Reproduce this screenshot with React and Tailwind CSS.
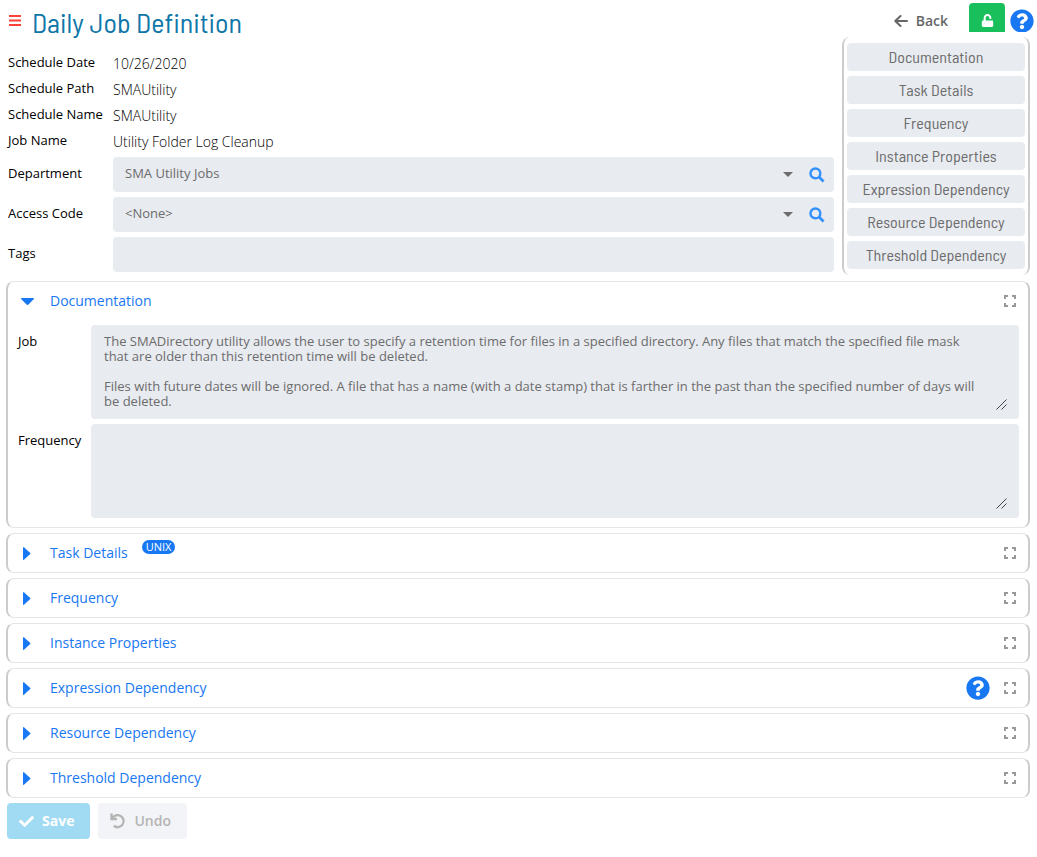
import React from "react";
import { FaCheck, FaQuestionCircle, FaUnlock } from "react-icons/fa";

const sections = [
  "Documentation",
  "Task Details",
  "Frequency",
  "Instance Properties",
  "Expression Dependency",
  "Resource Dependency",
  "Threshold Dependency",
];

const facts = [
  ["Schedule Date", "10/26/2020"],
  ["Schedule Path", "SMAUtility"],
  ["Schedule Name", "SMAUtility"],
  ["Job Name", "Utility Folder Log Cleanup"],
];

const jobText = `The SMADirectory utility allows the user to specify a retention time for files in a specified directory. Any files that match the specified file mask that are older than this retention time will be deleted.

Files with future dates will be ignored. A file that has a name (with a date stamp) that is farther in the past than the specified number of days will be deleted.`;

function ExpandIcon() {
  return (
    <svg viewBox="0 0 12 12" className="h-3 w-3 fill-none stroke-[#999] stroke-2" aria-hidden="true">
      <path d="M1 4V1H4M8 1H11V4M11 8V11H8M4 11H1V8" />
    </svg>
  );
}

function SearchIcon() {
  return (
    <svg viewBox="0 0 16 16" className="h-4 w-4 fill-none stroke-[#3390fb]" aria-hidden="true">
      <circle cx="6.4" cy="6.4" r="4.9" strokeWidth="2.4" />
      <path d="M10 10L14.6 14.4" strokeWidth="2.8" />
    </svg>
  );
}

function Lookup({ id, label, value }) {
  return (
    <>
      <label htmlFor={id} className="self-center pb-[2px]">{label}</label>
      <div className="flex h-[35px] items-center rounded bg-[#e8ebf0] pr-[9px]">
        <div className="relative flex h-full flex-1 items-center">
          <select id={id} className="h-full w-full appearance-none bg-transparent pb-[2px] pl-3 text-[#6c6c6c] outline-none">
            <option>{value}</option>
          </select>
          <svg viewBox="0 0 10 5" className="pointer-events-none absolute right-4 h-[5px] w-[10px] fill-[#6c6c6c]" aria-hidden="true">
            <path d="M0 0H10L5 5Z" />
          </svg>
        </div>
        <button type="button" aria-label={`Find ${label}`}>
          <SearchIcon />
        </button>
      </div>
    </>
  );
}

function Note({ id, label, text }) {
  return (
    <>
      <label htmlFor={id} className="pt-[7px]">{label}</label>
      <div className="relative rounded bg-[#e8ebf0] pt-[9px] pr-[11px] pb-2 pl-[13px]">
        <textarea id={id} defaultValue={text} className="block h-[77px] w-full resize-none overflow-hidden bg-transparent pr-7 leading-[15px] text-[#6c6c6c] outline-none" />
        <svg viewBox="0 0 11 11" className="pointer-events-none absolute right-3 bottom-[9px] h-[11px] w-[11px] fill-none stroke-[#444]" aria-hidden="true">
          <path d="M0.500 10.500L10.500 0.500M5.500 10.500L10.500 5.500" />
        </svg>
      </div>
    </>
  );
}

function Panel({ title, open, badge, help, children }) {
  return (
    <section className="rounded-lg border-x-2 border-y border-x-[#ccc] border-y-[#e6e6e6]">
      <div className="flex h-[38px] items-center px-3">
        <button type="button" aria-expanded={Boolean(open)} className="flex items-center text-sm text-[#1877f2]">
          <span className="flex w-[30px] justify-start">
            {open ? (
              <svg viewBox="0 0 13 7" className="ml-px h-[7px] w-[13px] fill-[#1877f2]" aria-hidden="true">
                <path d="M0.600 0H12.400Q13.400 0.200 12.600 1.200L7.500 6.500Q6.500 7.400 5.500 6.500L0.400 1.200Q-0.400 0.200 0.600 0Z" />
              </svg>
            ) : (
              <svg viewBox="0 0 13 13" className="h-[13px] w-[13px] fill-[#1877f2]" aria-hidden="true">
                <path d="M3 0.600Q3.200 -0.400 4.200 0.400L10 5.700Q10.800 6.500 10 7.300L4.200 12.600Q3.200 13.400 3 12.400Z" />
              </svg>
            )}
          </span>
          {title}
        </button>
        {badge && (
          <span className="mb-3 ml-[14px] rounded-full bg-[#1877f2] px-1 text-[11px] leading-[14px] text-white">{badge}</span>
        )}
        <div className="ml-auto flex items-center gap-[14px]">
          {help && (
            <button type="button" aria-label={`${title} help`}>
              <FaQuestionCircle className="h-6 w-6 text-[#1877f2]" />
            </button>
          )}
          <button type="button" aria-label={`Maximize ${title}`}>
            <ExpandIcon />
          </button>
        </div>
      </div>
      {children}
    </section>
  );
}

export default function App() {
  return (
    <main className="bg-white px-[7px] pt-[3px] font-['Open_Sans',sans-serif] text-[13px] text-black">
      <header className="flex h-[34px] justify-between">
        <div className="flex items-center">
          <button type="button" aria-label="Menu" className="ml-0.5 flex w-[23px] pt-px">
            <svg viewBox="0 0 12 12" className="h-3 w-3 fill-[#ff4136]" aria-hidden="true">
              <path d="M0 0H12V2H0ZM0 4.500H12V6.500H0ZM0 9H12V11H0Z" />
            </svg>
          </button>
          <h1 className="pt-1 font-['Barlow_Semi_Condensed','Roboto_Condensed','Roboto',sans-serif] text-[28px] leading-[30px] text-[#0e76a8]">Daily Job Definition</h1>
        </div>
        <div className="flex items-start">
          <button type="button" className="mr-[21px] flex h-[35px] items-center gap-2 text-sm font-semibold text-[#666]">
            <svg viewBox="0 0 14 14" className="h-[14px] w-[14px] fill-none stroke-[#666] stroke-2" strokeLinecap="round" strokeLinejoin="round" aria-hidden="true">
              <path d="M13 7H1.500M6.500 2L1.300 7L6.500 12" />
            </svg>
            Back
          </button>
          <button type="button" aria-label="Unlock" className="mr-[5px] flex h-[29px] w-9 items-center justify-center rounded-t bg-[#18bf5b] pt-1.5">
            <FaUnlock className="h-[13px] w-[13px] text-white" />
          </button>
          <button type="button" aria-label="Help" className="mt-1.5 mr-[-4px] h-[23px] overflow-hidden">
            <FaQuestionCircle className="h-6 w-6 text-[#1877f2]" />
          </button>
        </div>
      </header>

      <div className="flex gap-2">
        <form className="grid flex-1 grid-cols-[105px_1fr] content-start gap-y-[5px] pt-[13px] pl-px">
          <dl className="col-span-2 flex h-[102px] flex-col">
            {facts.map(([name, value]) => (
              <div key={name} className="grid h-[26px] shrink-0 grid-cols-[105px_1fr]">
                <dt className="leading-[24px]">{name}</dt>
                <dd className="text-[14px] leading-[28px] font-light">{value}</dd>
              </div>
            ))}
          </dl>
          <Lookup id="department" label="Department" value="SMA Utility Jobs" />
          <Lookup id="access" label="Access Code" value="<None>" />
          <label htmlFor="tags" className="self-center pb-[2px]">Tags</label>
          <input id="tags" className="h-[35px] w-full rounded bg-[#e8ebf0] px-3 outline-none" />
        </form>
        <nav className="flex w-[188px] flex-col gap-[5px] rounded-lg border-x-2 border-[#ccc] px-[3px] py-1.5 font-['Barlow_Semi_Condensed','Roboto_Condensed','Roboto',sans-serif] text-base">
          {sections.map((name) => (
            <button key={name} type="button" className="h-[28px] rounded bg-[#e8ebf0] text-[#6c6c6c]">{name}</button>
          ))}
        </nav>
      </div>

      <div className="mt-1.5 -ml-px flex flex-col gap-[5px]">
        <Panel title="Documentation" open>
          <div className="grid grid-cols-[73px_1fr] gap-y-[5px] pt-[5px] pr-[9px] pb-[9px] pl-[10px]">
            <Note id="job-note" label="Job" text={jobText} />
            <Note id="frequency-note" label="Frequency" text="" />
          </div>
        </Panel>
        <Panel title="Task Details" badge="UNIX" />
        <Panel title="Frequency" />
        <Panel title="Instance Properties" />
        <Panel title="Expression Dependency" help />
        <Panel title="Resource Dependency" />
        <Panel title="Threshold Dependency" />
      </div>

      <footer className="mt-[5px] flex gap-2 text-sm">
        <button type="button" disabled className="flex h-9 items-center gap-2 rounded bg-[#a1daf3] pr-4 pl-3 font-bold text-white">
          <FaCheck className="h-[15px] w-[15px]" />
          Save
        </button>
        <button type="button" disabled className="flex h-9 items-center gap-2 rounded bg-[#f3f4f7] pr-4 pl-3 font-semibold text-[#b5b5b5]">
          <svg viewBox="0 0 16 16" className="h-4 w-4 fill-none stroke-[#b5b5b5] stroke-[2.400]" aria-hidden="true">
            <path d="M1.500 0.500V6H7M2.200 5.600A6 6 0 1 1 3.800 12.800" />
          </svg>
          Undo
        </button>
      </footer>
    </main>
  );
}
